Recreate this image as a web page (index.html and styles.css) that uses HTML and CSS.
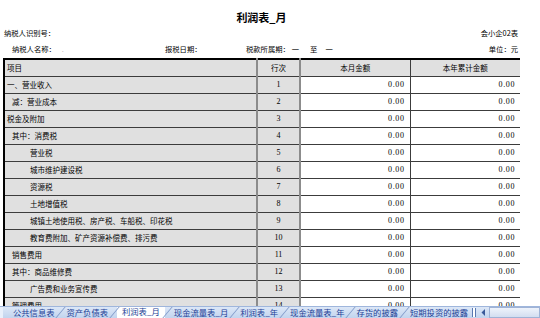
FILE: index.html
```html
<!DOCTYPE html>
<html lang="zh">
<head>
<meta charset="utf-8">
<title>利润表_月</title>
<link rel="stylesheet" href="styles.css">
</head>
<body>
<div class="page">
  <div class="sheet">
    <h1 class="title">利润表_月</h1>
    <div class="info info-1"><span>纳税人识别号：</span><span>会小企02表</span></div>
    <div class="info info-2">
      <span>纳税人名称：<span class="faint">.</span></span>
      <span>报税日期：</span>
      <span class="period">税款所属期：<span class="dash">一</span><span class="to">至</span><span class="dash">一</span></span>
      <span>单位：元</span>
    </div>
    <table class="grid">
      <colgroup>
        <col class="c-item"><col class="c-no"><col class="c-amt"><col class="c-amt2">
      </colgroup>
      <thead>
        <tr><th class="item">项目</th><th class="no">行次</th><th>本月金额</th><th>本年累计金额</th></tr>
      </thead>
      <tbody>
        <tr><td class="item">一、营业收入</td><td class="no">1</td><td class="amt">0.00</td><td class="amt">0.00</td></tr>
        <tr><td class="item l1">减：营业成本</td><td class="no">2</td><td class="amt">0.00</td><td class="amt">0.00</td></tr>
        <tr><td class="item">税金及附加</td><td class="no">3</td><td class="amt">0.00</td><td class="amt">0.00</td></tr>
        <tr><td class="item l1">其中：消费税</td><td class="no">4</td><td class="amt">0.00</td><td class="amt">0.00</td></tr>
        <tr><td class="item l2">营业税</td><td class="no">5</td><td class="amt">0.00</td><td class="amt">0.00</td></tr>
        <tr><td class="item l2">城市维护建设税</td><td class="no">6</td><td class="amt">0.00</td><td class="amt">0.00</td></tr>
        <tr><td class="item l2">资源税</td><td class="no">7</td><td class="amt">0.00</td><td class="amt">0.00</td></tr>
        <tr><td class="item l2">土地增值税</td><td class="no">8</td><td class="amt">0.00</td><td class="amt">0.00</td></tr>
        <tr><td class="item l2">城镇土地使用税、房产税、车船税、印花税</td><td class="no">9</td><td class="amt">0.00</td><td class="amt">0.00</td></tr>
        <tr><td class="item l2">教育费附加、矿产资源补偿费、排污费</td><td class="no">10</td><td class="amt">0.00</td><td class="amt">0.00</td></tr>
        <tr><td class="item l1">销售费用</td><td class="no">11</td><td class="amt">0.00</td><td class="amt">0.00</td></tr>
        <tr><td class="item l1">其中：商品维修费</td><td class="no">12</td><td class="amt">0.00</td><td class="amt">0.00</td></tr>
        <tr><td class="item l2">广告费和业务宣传费</td><td class="no">13</td><td class="amt">0.00</td><td class="amt">0.00</td></tr>
        <tr><td class="item l1">管理费用</td><td class="no">14</td><td class="amt">0.00</td><td class="amt">0.00</td></tr>
      </tbody>
    </table>
  </div>
  <div class="tabbar">
    <div class="tabs">
      <span class="tab">公共信息表</span><i class="sep"></i>
      <span class="tab">资产负债表</span><i class="sep"></i>
      <span class="tab active">利润表_月</span><i class="sep"></i>
      <span class="tab">现金流量表_月</span><i class="sep"></i>
      <span class="tab">利润表_年</span><i class="sep"></i>
      <span class="tab">现金流量表_年</span><i class="sep"></i>
      <span class="tab">存货的披露</span><i class="sep"></i>
      <span class="tab">短期投资的披露</span>
    </div>
    <div class="hscroll">
      <span class="splitter"></span>
      <svg class="arrow" width="7" height="9" viewBox="0 0 7 9"><path d="M5 1 L1.5 4.5 L5 8 Z" fill="#3b5a9a"/></svg>
      <span class="track"></span>
    </div>
  </div>
</div>
</body>
</html>
```

FILE: styles.css
```css
* { box-sizing: border-box; }
html, body { margin: 0; padding: 0; background: #fff; }
body {
  font-family: "Noto Sans CJK SC", "Noto Sans", sans-serif;
  color: #000;
}
.page {
  width: 540px;
  height: 318px;
  display: flex;
  flex-direction: column;
  overflow: hidden;
}
.sheet {
  flex: 1;
  overflow: hidden;
  padding: 10px 0 0 3px;
  width: 520px;
}
.title {
  margin: 0 0 1px;
  height: 14px;
  line-height: 14px;
  font-size: 11px;
  font-weight: bold;
  text-align: center;
}
.info {
  height: 16px;
  line-height: 16px;
  font-size: 7.3px;
  white-space: nowrap;
}
.info-1 {
  display: flex;
  justify-content: space-between;
  padding: 0 2px 0 1px;
}
.info-2 {
  display: grid;
  grid-template-columns: 153px 81px 1fr auto;
  padding: 0 2px 0 9px;
}
.faint { color: #bbb; margin-left: 6px; }
.period .dash { display: inline-block; margin-left: 2px; }
.period .to { display: inline-block; margin: 0 6px 0 11px; }
.grid {
  margin-top: 1px;
  width: 517px;
  table-layout: fixed;
  border-collapse: collapse;
  border: 2px solid #000;
  font-size: 7.5px;
}
.c-item { width: 253px; }
.c-no { width: 43px; }
.c-amt { width: 110px; }
.c-amt2 { width: 111px; }
.grid tr { height: 17px; }
.grid th, .grid td {
  padding: 0;
  border: 1px solid #3c3c3c;
  white-space: nowrap;
  overflow: hidden;
  vertical-align: middle;
}
.grid th {
  background: #e0e0e0;
  font-weight: normal;
  text-align: center;
}
.grid th.item { text-align: left; padding-left: 2px; }
.grid .no {
  border-left: 2px solid #8c8c8c;
  border-right: 2px solid #8c8c8c;
  text-align: center;
}
.grid td.item, .grid td.no { background: #e0e0e0; }
.grid td.item { padding-left: 2px; }
.grid td.l1 { padding-left: 7px; }
.grid td.l2 { padding-left: 25px; }
.grid td.no {
  font-family: "Liberation Serif", serif;
  font-size: 8px;
}
.grid td.amt {
  background: #fff;
  text-align: right;
  padding-right: 5px;
  font-family: "Liberation Serif", serif;
  font-size: 8px;
  letter-spacing: 0.6px;
}
.tabbar {
  height: 12px;
  flex: none;
  display: flex;
  background: linear-gradient(#dce7f7, #c2d4ee);
  border-top: 1px solid #9fb6dc;
}
.tabs {
  flex: 1;
  display: flex;
  align-items: stretch;
  padding-left: 7px;
  border-left: 3px solid #e9f0fb;
  font-size: 8.3px;
  line-height: 11px;
  color: #1d3f96;
  white-space: nowrap;
  overflow: hidden;
}
.tab { padding: 0 3px; }
.tab.active {
  background: #fff;
  color: #1d3f96;
  margin-top: -1px;
  padding: 0 5px;
}
.sep {
  display: inline-block;
  flex: none;
  width: 1px;
  height: 11px;
  margin: 0 2.5px;
  background: #7e98c8;
  transform: skewX(-40deg);
}
.hscroll {
  width: 68px;
  flex: none;
  display: flex;
  align-items: center;
}
.splitter {
  width: 4px;
  height: 9px;
  margin-right: 4px;
  border-left: 1px solid #5a79b0;
  border-right: 1px solid #5a79b0;
  background: #fff;
}
.arrow { flex: none; margin-right: 2px; }
.track {
  flex: 1;
  height: 11px;
  background: linear-gradient(#eef3fb, #d3def0);
  border: 1px solid #9fb3d6;
}
```
